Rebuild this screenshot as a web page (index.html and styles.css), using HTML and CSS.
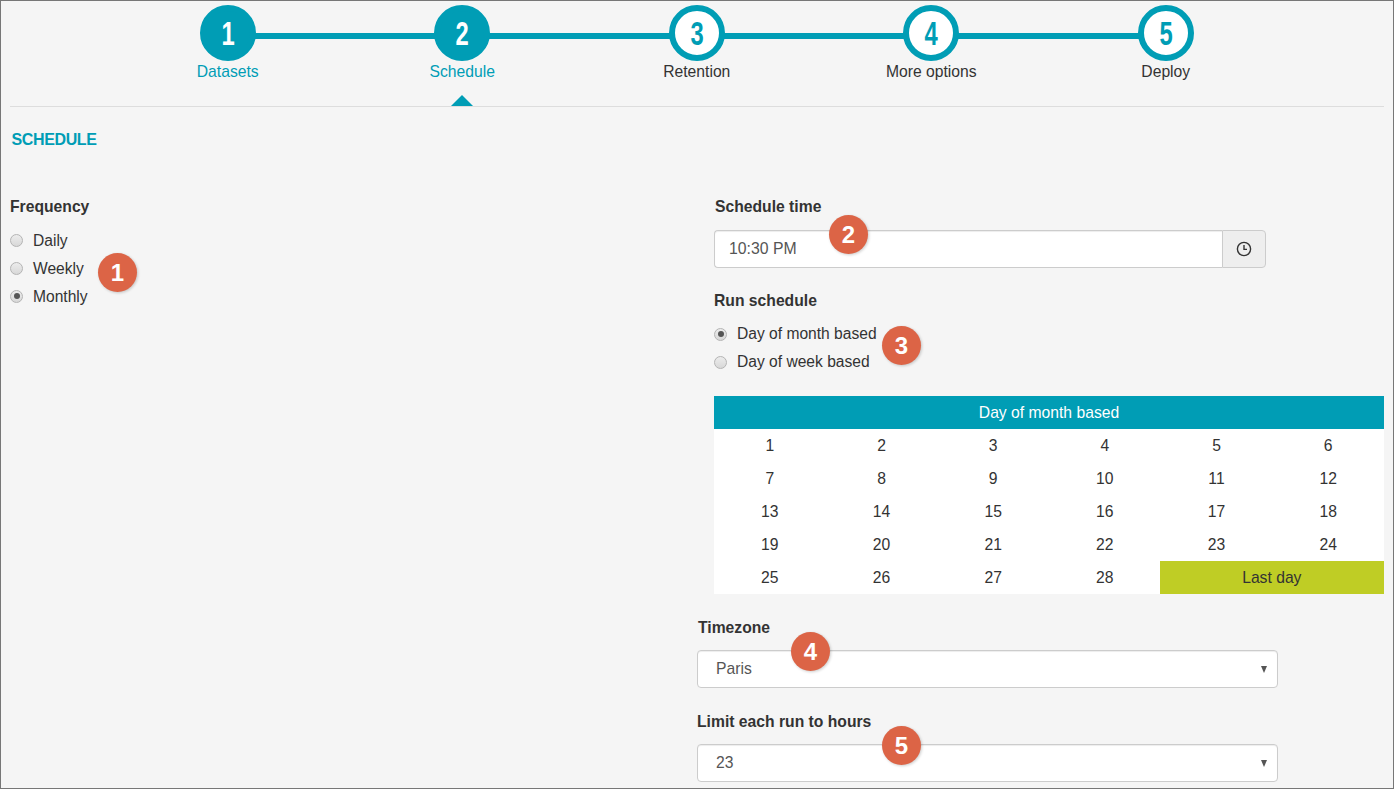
FILE: index.html
```html
<!DOCTYPE html>
<html lang="en">
<head>
<meta charset="utf-8">
<title>Schedule</title>
<link rel="stylesheet" href="styles.css">
</head>
<body>
<div class="frame">
  <nav class="stepper">
    <div class="step done"><span class="num"><span class="digit">1</span></span><span class="step-label">Datasets</span></div>
    <div class="step done current"><span class="num"><span class="digit">2</span></span><span class="step-label">Schedule</span></div>
    <div class="step"><span class="num"><span class="digit">3</span></span><span class="step-label">Retention</span></div>
    <div class="step"><span class="num"><span class="digit">4</span></span><span class="step-label">More options</span></div>
    <div class="step last"><span class="num"><span class="digit">5</span></span><span class="step-label">Deploy</span></div>
  </nav>
  <h2 class="section-title">SCHEDULE</h2>
  <div class="columns">
    <section class="col-left">
      <h3 class="field-label">Frequency</h3>
      <div class="radio-list anchor">
        <label class="radio"><input type="radio" name="freq">Daily</label>
        <label class="radio"><input type="radio" name="freq">Weekly</label>
        <label class="radio"><input type="radio" name="freq" checked>Monthly</label>
        <span class="badge badge-1">1</span>
      </div>
    </section>
    <section class="col-right">
      <div class="inset">
        <h3 class="field-label nudge">Schedule time</h3>
        <div class="input-group anchor">
          <input class="time-input" type="text" value="10:30 PM">
          <span class="addon">
            <svg width="16" height="16" viewBox="0 0 16 16" fill="none" stroke="#333" stroke-width="1.4"><circle cx="8" cy="8" r="6.6"/><path d="M8 4v4.4h3"/></svg>
          </span>
          <span class="badge badge-2">2</span>
        </div>
        <h3 class="field-label run">Run schedule</h3>
        <div class="radio-list radio-list-run anchor">
          <label class="radio"><input type="radio" name="run" checked>Day of month based</label>
          <label class="radio"><input type="radio" name="run">Day of week based</label>
          <span class="badge badge-3">3</span>
        </div>
        <div class="calendar">
          <div class="cal-head">Day of month based</div>
          <div class="cal-grid">
            <span>1</span><span>2</span><span>3</span><span>4</span><span>5</span><span>6</span>
            <span>7</span><span>8</span><span>9</span><span>10</span><span>11</span><span>12</span>
            <span>13</span><span>14</span><span>15</span><span>16</span><span>17</span><span>18</span>
            <span>19</span><span>20</span><span>21</span><span>22</span><span>23</span><span>24</span>
            <span>25</span><span>26</span><span>27</span><span>28</span><span class="last-day">Last day</span>
          </div>
        </div>
      </div>
      <h3 class="field-label tz">Timezone</h3>
      <div class="select-box anchor"><span>Paris</span><i class="caret"></i><span class="badge badge-4">4</span></div>
      <h3 class="field-label limit">Limit each run to hours</h3>
      <div class="select-box anchor"><span>23</span><i class="caret"></i><span class="badge badge-5">5</span></div>
    </section>
  </div>
</div>
</body>
</html>
```
FILE: styles.css
```css
* { box-sizing: border-box; }
html, body { margin: 0; padding: 0; }
body {
  font-family: "Liberation Sans", Arial, sans-serif;
  font-size: 15.7px;
  color: #333;
}
.frame {
  width: 1394px;
  height: 789px;
  overflow: hidden;
  background: #f5f5f5;
  border: 1px solid #777;
  padding: 0 9px;
}
.stepper {
  display: grid;
  grid-template-columns: repeat(5, 234.5px);
  justify-content: center;
  height: 106px;
  padding: 4px 0.5px 0 0;
  border-bottom: 1px solid #ddd;
  position: relative;
}
.step {
  position: relative;
  display: flex;
  flex-direction: column;
  align-items: center;
}
.step::after {
  content: "";
  position: absolute;
  left: 50%;
  width: 100%;
  top: 28px;
  height: 6px;
  background: #009db5;
}
.step.last::after { display: none; }
.num {
  position: relative;
  z-index: 1;
  width: 56px;
  height: 56px;
  border-radius: 50%;
  border: 6px solid #009db5;
  background: #fff;
  color: #009db5;
  display: flex;
  align-items: center;
  justify-content: center;
  font-weight: 700;
  font-size: 33px;
  line-height: 1;
}
.digit { display: block; transform: scaleX(0.72); }
.step.done .num { background: #009db5; color: #fff; }
.step-label { line-height: 20px; margin-top: 1px; }
.step.done .step-label { color: #009db5; }
.step.current::before {
  content: "";
  position: absolute;
  left: 50%;
  bottom: 0;
  margin-left: -11.5px;
  border: 11.5px solid transparent;
  border-top: 0;
  border-bottom: 11px solid #009db5;
}
.section-title {
  margin: 23px 0 0 1.5px;
  font-size: 16px;
  letter-spacing: -0.37px;
  line-height: 20px;
  font-weight: 700;
  color: #009db5;
}
.columns {
  display: flex;
  margin-top: 47px;
}
.col-left { width: 687px; }
.col-right { width: 687px; }
.field-label {
  margin: 0;
  font-size: 15.7px;
  line-height: 20px;
  font-weight: 700;
  color: #333;
}
.nudge { padding-left: 1px; }
.anchor { position: relative; }
.radio-list { margin-top: 10px; width: max-content; }
.radio {
  display: flex;
  align-items: center;
  height: 28px;
  color: #333;
  font-size: 15.6px;
}
.radio input {
  appearance: none;
  -webkit-appearance: none;
  flex: none;
  width: 13px;
  height: 13px;
  margin: 0 10px 0 0;
  border: 1px solid #b4b4b4;
  border-radius: 50%;
  background: linear-gradient(#ececec, #d8d8d8);
  position: relative;
}
.col-left .radio input { margin-bottom: 2px; }
.radio input:checked::after {
  content: "";
  position: absolute;
  left: 2.5px;
  top: 2.5px;
  width: 6px;
  height: 6px;
  border-radius: 50%;
  background: #555;
}
.inset { padding-left: 17px; }
.input-group {
  display: flex;
  width: 552px;
  height: 38px;
  margin-top: 13px;
}
.time-input {
  flex: 1;
  min-width: 0;
  height: 38px;
  border: 1px solid #ccc;
  border-right: 0;
  border-radius: 4px 0 0 4px;
  background: #fff;
  box-shadow: inset 0 1px 1px rgba(0, 0, 0, 0.075);
  padding: 0 14px;
  font: 15.8px "Liberation Sans", Arial, sans-serif;
  color: #555;
  outline: none;
}
.addon {
  width: 44px;
  display: flex;
  align-items: center;
  justify-content: center;
  background: #eee;
  border: 1px solid #ccc;
  border-radius: 0 4px 4px 0;
}
.run { margin-top: 23px; }
.radio-list-run { margin-top: 9px; }
.calendar { width: 670px; margin-top: 20px; }
.cal-head {
  height: 33px;
  line-height: 33px;
  text-align: center;
  background: #009db5;
  color: #fff;
}
.cal-grid {
  display: grid;
  grid-template-columns: repeat(6, 1fr);
  grid-auto-rows: 33px;
  background: #fff;
}
.cal-grid span {
  text-align: center;
  line-height: 33px;
  color: #333;
}
.cal-grid .last-day {
  grid-column: span 2;
  margin-left: -1px;
  background: #bfcd25;
}
.tz { margin-top: 24px; padding-left: 1px; }
.limit { margin-top: 24px; }
.select-box {
  width: 581px;
  height: 38px;
  margin-top: 12px;
  padding: 0 18px;
  display: flex;
  align-items: center;
  background: #fff;
  border: 1px solid #ccc;
  border-radius: 4px;
  box-shadow: inset 0 1px 1px rgba(0, 0, 0, 0.075);
  color: #555;
}
.caret {
  position: absolute;
  right: 10px;
  top: 15px;
  width: 0;
  height: 0;
  border-left: 3.5px solid transparent;
  border-right: 3.5px solid transparent;
  border-top: 7px solid #555;
}
.badge {
  position: absolute;
  width: 39px;
  height: 39px;
  border-radius: 50%;
  background: #dc6446;
  color: #fff;
  font-size: 24px;
  font-weight: 700;
  line-height: 39px;
  text-align: center;
  box-shadow: 1px 1px 3px rgba(0, 0, 0, 0.2);
}
.badge-1 { left: 88px; top: 26px; }
.badge-2 { left: 115px; top: -15px; }
.badge-3 { left: 168px; top: 6px; }
.badge-4 { left: 93px; top: -19px; }
.badge-5 { left: 184px; top: -19px; }
```
